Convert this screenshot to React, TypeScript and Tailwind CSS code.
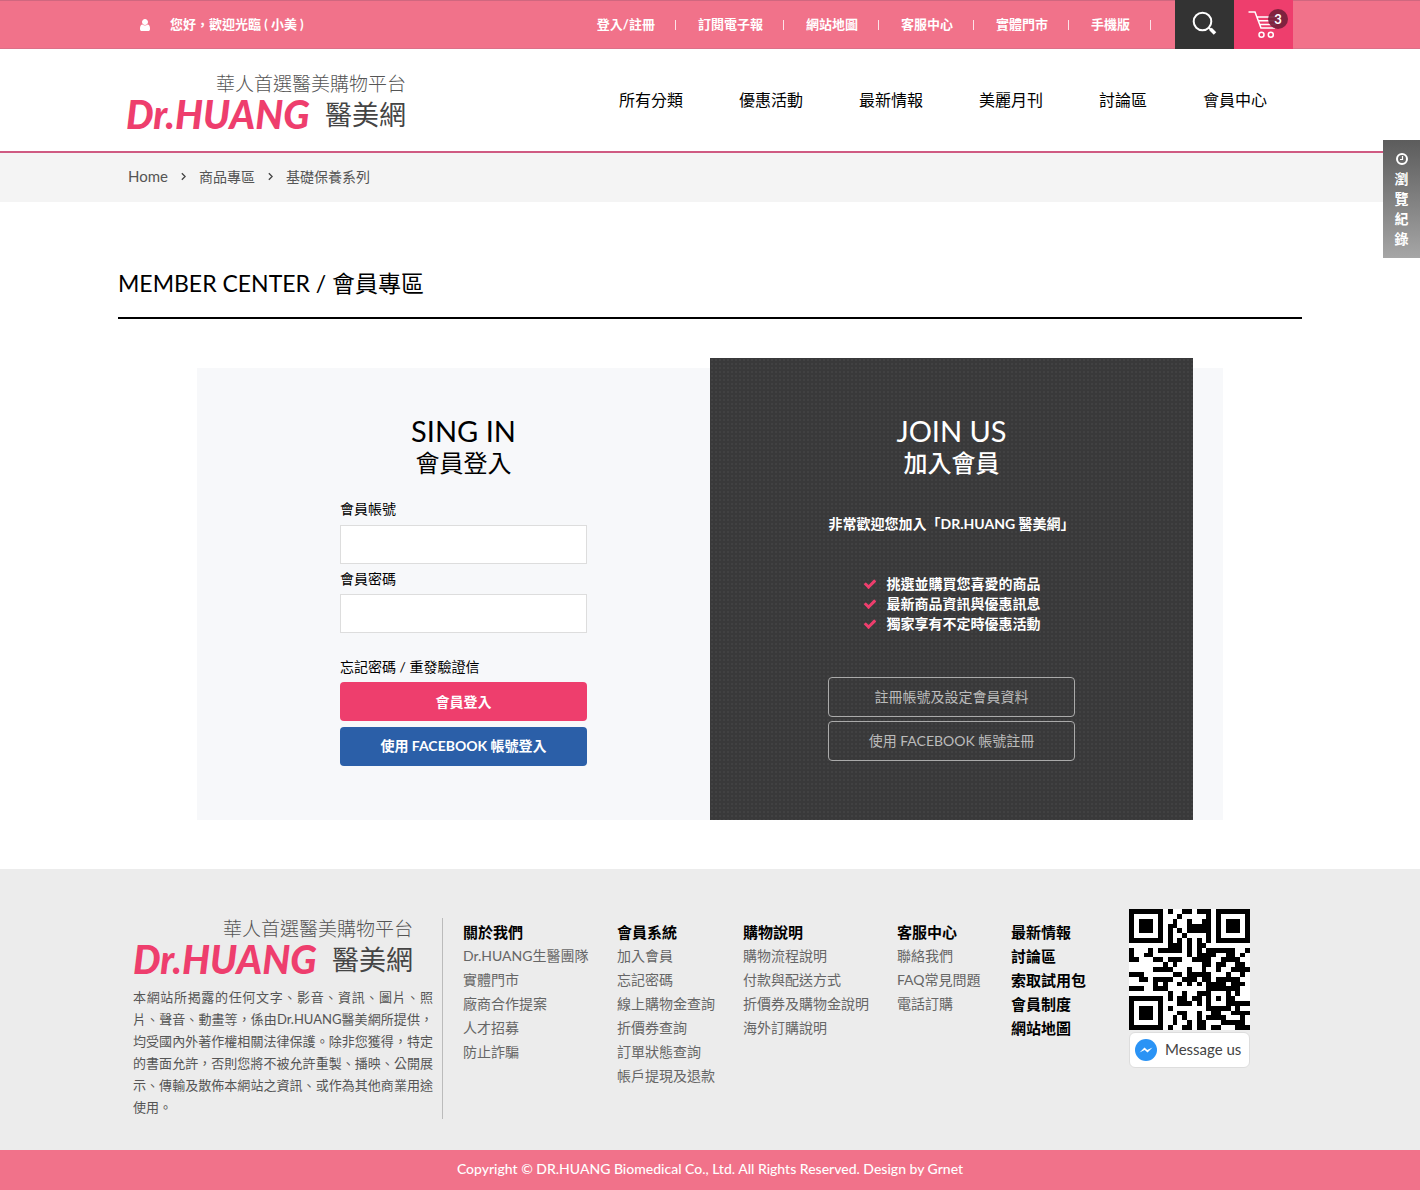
import React from "react";

const topLinks = ["登入/註冊", "訂閱電子報", "網站地圖", "客服中心", "實體門市", "手機版"];
const mainLinks = ["所有分類", "優惠活動", "最新情報", "美麗月刊", "討論區", "會員中心"];

type Column = { title: string; width: string; items: string[]; strong?: boolean };
const footerColumns: Column[] = [
  { title: "關於我們", width: "w-[154px]", items: ["Dr.HUANG生醫團隊", "實體門市", "廠商合作提案", "人才招募", "防止詐騙"] },
  { title: "會員系統", width: "w-[126px]", items: ["加入會員", "忘記密碼", "線上購物金查詢", "折價券查詢", "訂單狀態查詢", "帳戶提現及退款"] },
  { title: "購物說明", width: "w-[154px]", items: ["購物流程說明", "付款與配送方式", "折價券及購物金說明", "海外訂購說明"] },
  { title: "客服中心", width: "w-[114px]", items: ["聯絡我們", "FAQ常見問題", "電話訂購"] },
  { title: "最新情報", width: "w-[118px]", items: ["討論區", "索取試用包", "會員制度", "網站地圖"], strong: true },
];

// Version 2 (25x25) QR symbol, byte mode, level M, mask 4.
function makeQr(text: string): boolean[][] {
  const N = 25;
  const dataLen = 28;
  const ecLen = 16;
  const mask = 4;
  const bits: number[] = [];
  const push = (v: number, n: number) => {
    for (let i = n - 1; i >= 0; i--) bits.push((v >> i) & 1);
  };
  push(4, 4);
  push(text.length, 8);
  for (const c of text) push(c.charCodeAt(0), 8);
  push(0, 4);
  while (bits.length % 8) bits.push(0);
  const data: number[] = [];
  for (let i = 0; i < bits.length; i += 8) data.push(parseInt(bits.slice(i, i + 8).join(""), 2));
  for (let p = 0; data.length < dataLen; p++) data.push(p % 2 ? 0x11 : 0xec);

  const mul = (a: number, b: number) => {
    let z = 0;
    for (let i = 7; i >= 0; i--) {
      z = (z << 1) ^ ((z >>> 7) * 0x11d);
      z ^= ((b >>> i) & 1) * a;
    }
    return z;
  };
  const div: number[] = Array(ecLen).fill(0);
  div[ecLen - 1] = 1;
  let root = 1;
  for (let i = 0; i < ecLen; i++) {
    for (let j = 0; j < ecLen; j++) {
      div[j] = mul(div[j], root);
      if (j + 1 < ecLen) div[j] ^= div[j + 1];
    }
    root = mul(root, 2);
  }
  const rem: number[] = Array(ecLen).fill(0);
  for (const b of data) {
    const f = b ^ (rem.shift() as number);
    rem.push(0);
    div.forEach((c, i) => {
      rem[i] ^= mul(c, f);
    });
  }
  const all = data.concat(rem);

  const m: boolean[][] = Array.from({ length: N }, () => Array(N).fill(false));
  const fixed: boolean[][] = Array.from({ length: N }, () => Array(N).fill(false));
  const set = (x: number, y: number, v: boolean) => {
    if (x >= 0 && y >= 0 && x < N && y < N) {
      m[y][x] = v;
      fixed[y][x] = true;
    }
  };
  for (let i = 0; i < N; i++) {
    set(6, i, i % 2 === 0);
    set(i, 6, i % 2 === 0);
  }
  for (const [cx, cy] of [[3, 3], [N - 4, 3], [3, N - 4]])
    for (let dy = -4; dy <= 4; dy++)
      for (let dx = -4; dx <= 4; dx++) {
        const d = Math.max(Math.abs(dx), Math.abs(dy));
        set(cx + dx, cy + dy, d !== 2 && d !== 4);
      }
  for (let dy = -2; dy <= 2; dy++)
    for (let dx = -2; dx <= 2; dx++) set(18 + dx, 18 + dy, Math.max(Math.abs(dx), Math.abs(dy)) !== 1);

  let r = mask;
  for (let i = 0; i < 10; i++) r = (r << 1) ^ ((r >>> 9) * 0x537);
  const format = ((mask << 10) | r) ^ 0x5412;
  const bit = (i: number) => ((format >>> i) & 1) !== 0;
  for (let i = 0; i <= 5; i++) set(8, i, bit(i));
  set(8, 7, bit(6));
  set(8, 8, bit(7));
  set(7, 8, bit(8));
  for (let i = 9; i < 15; i++) set(14 - i, 8, bit(i));
  for (let i = 0; i < 8; i++) set(N - 1 - i, 8, bit(i));
  for (let i = 8; i < 15; i++) set(8, N - 15 + i, bit(i));
  set(8, N - 8, true);

  let k = 0;
  for (let right = N - 1; right >= 1; right -= 2) {
    if (right === 6) right = 5;
    for (let v = 0; v < N; v++)
      for (let j = 0; j < 2; j++) {
        const x = right - j;
        const y = ((right + 1) & 2) === 0 ? N - 1 - v : v;
        if (fixed[y][x]) continue;
        if (k < all.length * 8) m[y][x] = ((all[k >> 3] >>> (7 - (k & 7))) & 1) !== 0;
        k++;
        if ((Math.floor(x / 3) + Math.floor(y / 2)) % 2 === 0) m[y][x] = !m[y][x];
      }
  }
  return m;
}

const qrPath = makeQr("http://www.edrhuang.com.tw")
  .flatMap((row, y) => row.map((on, x) => (on ? `M${x} ${y}h1v1h-1z` : "")))
  .join("");

function QrCode() {
  return (
    <svg viewBox="0 0 25 25" className="size-[121px]" shapeRendering="crispEdges" role="img" aria-label="QR code">
      <rect width="25" height="25" fill="#fff" />
      <path d={qrPath} fill="#000" />
    </svg>
  );
}

function Logo() {
  return (
    <a href="#" className="flex w-[280px] flex-col font-['Noto_Sans_CJK_TC',sans-serif] text-[#555]">
      <span className="self-end text-[19px] leading-5 font-light">華人首選醫美購物平台</span>
      <span className="flex items-center justify-between">
        <span className="font-['Lato',sans-serif] text-[39px] leading-[42px] font-black text-[#ee3e6d] italic">Dr.HUANG</span>
        <span className="text-[27px] leading-[42px] text-[#444]">醫美網</span>
      </span>
    </a>
  );
}

function Chevron() {
  return (
    <svg viewBox="0 0 6 10" className="h-[9px] w-[5px]" fill="none" stroke="#444" strokeWidth="1.6" aria-hidden="true">
      <path d="M1 1l4 4-4 4" />
    </svg>
  );
}

function Check() {
  return (
    <svg viewBox="0 0 1792 1792" className="size-[14px] fill-[#ee3e6d]" aria-hidden="true">
      <path d="M1671 566q0 40-28 68l-724 724-136 136q-28 28-68 28t-68-28l-136-136-362-362q-28-28-28-68t28-68l136-136q28-28 68-28t68 28l294 295 656-657q28-28 68-28t68 28l136 136q28 28 28 68z" />
    </svg>
  );
}

export default function App() {
  return (
    <div className="relative min-h-screen bg-white font-['Lato','Noto_Sans_CJK_TC',sans-serif] text-sm text-black">
      <div className="border-y border-t-[#d0677f] border-b-[#dc7088] bg-[#f1728a]">
        <div className="mx-auto flex h-[47px] w-full max-w-[1184px] items-center pr-[9px] pl-5 text-[13px] font-bold text-white">
          <svg viewBox="0 0 1792 1792" className="size-[14px] fill-white" aria-hidden="true">
            <path d="M1536 1399q0 109-62.5 187t-150.5 78h-854q-88 0-150.5-78t-62.5-187q0-85 8.5-160.5t31.5-152 58.5-131 94-89 134.5-34.5q131 128 313 128t313-128q76 0 134.5 34.5t94 89 58.5 131 31.5 152 8.5 160.5zm-256-887q0 159-112.5 271.5t-271.5 112.5-271.5-112.5-112.5-271.5 112.5-271.5 271.5-112.5 271.5 112.5 112.5 271.5z" />
          </svg>
          <p className="ml-[18px]">您好，歡迎光臨 ( 小美 )</p>
          <nav className="mr-[2px] ml-auto flex items-center" aria-label="Site">
            {topLinks.map((t) => (
              <span key={t} className="flex items-center">
                <a href="#">{t}</a>
                <span className="mr-[22px] ml-5 h-[10px] w-px bg-white/80" />
              </span>
            ))}
          </nav>
          <button type="button" aria-label="搜尋" className="-my-px h-[49px] w-[59px] bg-[#333]">
            <svg viewBox="0 0 59 49" className="h-[49px] w-[59px]" fill="none" stroke="#fff" aria-hidden="true">
              <circle cx="27.5" cy="21.5" r="8.8" strokeWidth="2" />
              <path d="M34 28l3 2.500" strokeWidth="2" />
              <path d="M35.500 29l4.500 4.500" strokeWidth="3.500" />
            </svg>
          </button>
          <button type="button" aria-label="購物車" className="relative -my-px h-[49px] w-[59px] bg-[#ee3e6d]">
            <svg viewBox="0 0 59 49" className="h-[49px] w-[59px]" fill="none" stroke="#fff" strokeWidth="1.5" aria-hidden="true">
              <path d="M14.500 12h6.500l6 16h14M23 17h21M24.500 20.800h18M26 24.500h16" />
              <circle cx="27.5" cy="34.7" r="2.5" />
              <circle cx="36.800" cy="34.7" r="2.5" />
            </svg>
            <span className="absolute top-[9px] left-[34px] size-5 rounded-full bg-[#731f3a]/90 text-[13px] leading-5">3</span>
          </button>
        </div>
      </div>

      <header className="border-b-2 border-[#cf5a82]">
        <div className="mx-auto flex h-[102px] w-full max-w-[1184px] items-center justify-between pr-[35px] pl-2">
          <div className="pt-2">
            <Logo />
          </div>
          <nav className="flex gap-14 text-base" aria-label="Main">
            {mainLinks.map((t) => (
              <a key={t} href="#">{t}</a>
            ))}
          </nav>
        </div>
      </header>

      <nav className="bg-[#f4f4f4]" aria-label="Breadcrumb">
        <div className="mx-auto flex h-[49px] w-full max-w-[1184px] items-center gap-[13px] pb-[2px] pl-[10px] text-[#555]">
          <a href="#" className="text-[15px]">Home</a>
          <Chevron />
          <a href="#">商品專區</a>
          <Chevron />
          <a href="#">基礎保養系列</a>
        </div>
      </nav>

      <main className="mx-auto w-full max-w-[1184px] pt-16 pb-[49px]">
        <h1 className="border-b-2 border-black pb-[17px] text-[23px] leading-[34px]">MEMBER CENTER / 會員專區</h1>
        <div className="mx-auto mt-[49px] flex w-full max-w-[1026px] bg-[#f7f8fa]">
          <form className="flex flex-1 justify-center pt-[47px] pb-[54px] pl-5" onSubmit={(e) => e.preventDefault()}>
            <div className="flex w-[247px] flex-col">
              <h2 className="text-center text-[29px] leading-8">
                SING IN
                <span className="block text-2xl leading-8">會員登入</span>
              </h2>
              <label htmlFor="account" className="mt-5 leading-5">會員帳號</label>
              <input id="account" type="text" className="mt-[6px] h-[39px] border border-[#ddd] bg-white px-3" />
              <label htmlFor="password" className="mt-[5px] leading-5">會員密碼</label>
              <input id="password" type="password" className="mt-[5px] h-[39px] border border-[#ddd] bg-white px-3" />
              <p className="mt-6 leading-5">
                <a href="#">忘記密碼</a> / <a href="#">重發驗證信</a>
              </p>
              <button type="submit" className="mt-[5px] h-[39px] rounded bg-[#ee3e6d] font-bold text-white">會員登入</button>
              <button type="button" className="mt-[6px] h-[39px] rounded bg-[#2b5fa8] pb-[2px] font-bold text-white">使用 FACEBOOK 帳號登入</button>
            </div>
          </form>
          <section className="-mt-[10px] mr-[30px] flex w-[483px] flex-col items-center bg-[#39393a] bg-[radial-gradient(#414142_1px,transparent_1px)] bg-[size:4px_4px] pt-[57px] text-white">
            <h2 className="text-center text-[29px] leading-8">
              JOIN US
              <span className="block text-2xl leading-8 font-medium">加入會員</span>
            </h2>
            <p className="mt-[35px] leading-5 font-bold">非常歡迎您加入「DR.HUANG 醫美網」</p>
            <ul className="mt-10 font-bold">
              {["挑選並購買您喜愛的商品", "最新商品資訊與優惠訊息", "獨家享有不定時優惠活動"].map((t) => (
                <li key={t} className="flex items-center gap-[10px] leading-5">
                  <Check />
                  {t}
                </li>
              ))}
            </ul>
            <button type="button" className="mt-[43px] h-10 w-[247px] rounded border border-[#aaa] text-[#bbb]">註冊帳號及設定會員資料</button>
            <button type="button" className="mt-1 h-10 w-[247px] rounded border border-[#aaa] text-[#bbb]">使用 FACEBOOK 帳號註冊</button>
          </section>
        </div>
      </main>

      <footer>
        <div className="bg-[#ececec]">
          <div className="mx-auto flex min-h-[281px] w-full max-w-[1184px] items-start pt-10 pl-[15px] text-[#666]">
            <div className="mt-[9px] min-h-[201px] w-[310px] shrink-0 border-r border-[#bbb]">
              <Logo />
              <p className="mt-[6px] w-[300px] text-justify text-[13px] leading-[22px] text-[#555]">
                本網站所揭露的任何文字、影音、資訊、圖片、照片、聲音、動畫等，係由Dr.HUANG醫美網所提供，均受國內外著作權相關法律保護。除非您獲得，特定的書面允許，否則您將不被允許重製、播映、公開展示、傳輸及散佈本網站之資訊、或作為其他商業用途使用。
              </p>
            </div>
            <div className="mt-[11px] ml-5 flex leading-6">
              {footerColumns.map((c) => (
                <div key={c.title} className={c.width}>
                  <h3 className="text-[15px] font-bold text-black">{c.title}</h3>
                  <ul className={c.strong ? "text-[15px] font-bold text-black" : ""}>
                    {c.items.map((i) => (
                      <li key={i}>
                        <a href="#" className="whitespace-nowrap">{i}</a>
                      </li>
                    ))}
                  </ul>
                </div>
              ))}
            </div>
            <div className="w-[121px] shrink-0">
              <QrCode />
              <a href="#" className="mt-[2px] flex h-9 items-center gap-2 rounded-md border border-[#ddd] bg-white pl-[5px] text-[15px] text-[#444]">
                <svg viewBox="0 0 22 22" className="size-[22px]" aria-hidden="true">
                  <circle cx="11" cy="11" r="11" fill="#2a93f5" />
                  <path d="M4.500 13.500l5-5 2.700 2.500 5.300-2.500-5 5-2.800-2.500z" fill="#fff" />
                </svg>
                Message us
              </a>
            </div>
          </div>
        </div>
        <p className="bg-[#f1728a] pb-[2px] text-center leading-[38px] font-medium text-white">
          Copyright © DR.HUANG Biomedical Co., Ltd. All Rights Reserved. Design by Grnet
        </p>
      </footer>

      <aside className="absolute top-[140px] right-0 flex w-[37px] flex-col items-center bg-linear-to-b from-[#5c5c5c] to-[#a6a6a6] pt-3 pb-[9px] font-bold text-white">
        <svg viewBox="0 0 14 14" className="mb-[3px] size-[14px]" fill="none" stroke="#fff" aria-hidden="true">
          <circle cx="7" cy="7" r="5" strokeWidth="2" />
          <path d="M7.500 4v3.500H5" strokeWidth="1.200" />
        </svg>
        <button type="button" className="w-[14px] leading-5">瀏覽紀錄</button>
      </aside>
    </div>
  );
}
